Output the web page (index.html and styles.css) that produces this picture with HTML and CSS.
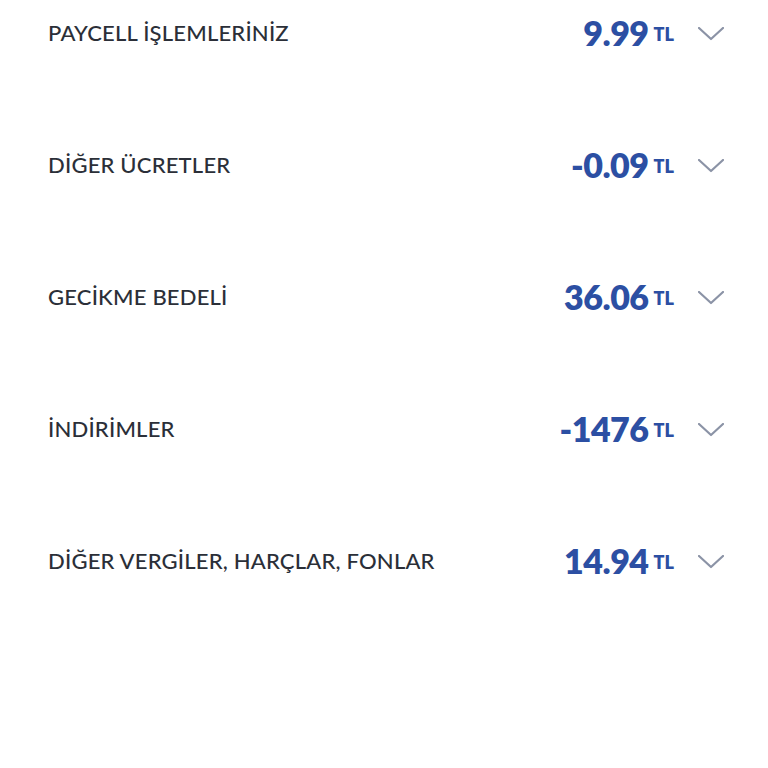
FILE: index.html
```html
<!DOCTYPE html>
<html lang="tr">
<head>
  <meta charset="UTF-8">
  <title>Fatura Detayı</title>
  <link rel="stylesheet" href="styles.css">
</head>
<body>
  <div class="list">
    <div class="row">
      <span class="label">PAYCELL İŞLEMLERİNİZ</span>
      <span class="amount">9.99<small>TL</small></span>
      <svg class="chevron" viewBox="0 0 26 14"><path d="M1 1 L13 12 L25 1"/></svg>
    </div>
    <div class="row">
      <span class="label">DİĞER ÜCRETLER</span>
      <span class="amount">-0.09<small>TL</small></span>
      <svg class="chevron" viewBox="0 0 26 14"><path d="M1 1 L13 12 L25 1"/></svg>
    </div>
    <div class="row">
      <span class="label">GECİKME BEDELİ</span>
      <span class="amount">36.06<small>TL</small></span>
      <svg class="chevron" viewBox="0 0 26 14"><path d="M1 1 L13 12 L25 1"/></svg>
    </div>
    <div class="row">
      <span class="label">İNDİRİMLER</span>
      <span class="amount">-1476<small>TL</small></span>
      <svg class="chevron" viewBox="0 0 26 14"><path d="M1 1 L13 12 L25 1"/></svg>
    </div>
    <div class="row">
      <span class="label">DİĞER VERGİLER, HARÇLAR, FONLAR</span>
      <span class="amount">14.94<small>TL</small></span>
      <svg class="chevron" viewBox="0 0 26 14"><path d="M1 1 L13 12 L25 1"/></svg>
    </div>
  </div>
</body>
</html>
```

FILE: styles.css
```css
body {
  margin: 0;
  background: #ffffff;
  font-family: "Lato", "Noto Sans", sans-serif;
}

.list {
  padding: 0 44px 0 48px;
  margin-top: -34px;
}

.row {
  display: flex;
  align-items: center;
  height: 132px;
}

.label {
  flex: 1;
  font-size: 22px;
  font-weight: 500;
  color: #2b2f38;
  letter-spacing: 0.2px;
}

.amount {
  font-size: 34px;
  font-weight: 800;
  color: #2c4fa3;
  letter-spacing: -0.5px;
}

.amount small {
  font-size: 18px;
  font-weight: 800;
  margin-left: 5px;
  letter-spacing: 0;
  vertical-align: 5px;
}

.chevron {
  width: 26px;
  height: 14px;
  margin: 3px 0 0 24px;
  fill: none;
  stroke: #8b93a6;
  stroke-width: 2.2;
  stroke-linecap: round;
  stroke-linejoin: round;
}
```
